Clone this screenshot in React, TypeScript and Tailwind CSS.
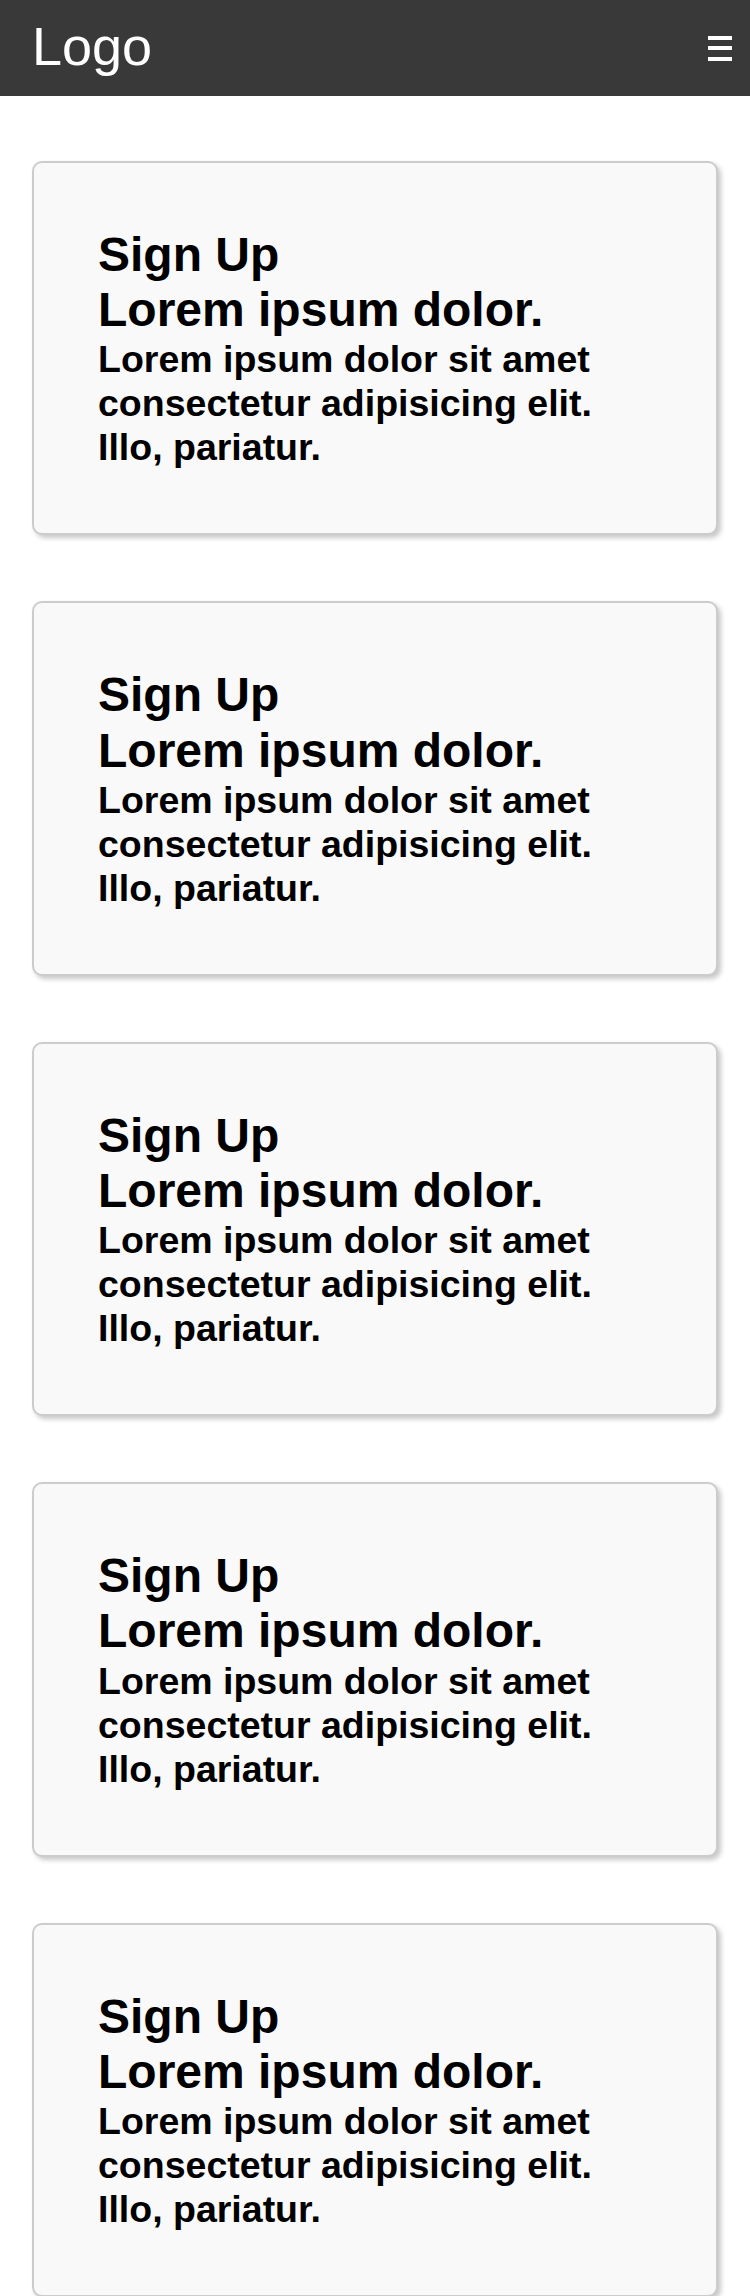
const cards = [1, 2, 3, 4, 5];

function Card() {
  return (
    <div className="rounded-[10px] border-2 border-[#cccccc] bg-[#f9f9f9] p-[64px] shadow-[3px_3px_5px_rgba(0,0,0,0.22)]">
      <h1 className="text-[48px] font-bold leading-[1.15] text-black">
        Sign Up
        <br />
        Lorem ipsum dolor.
      </h1>
      <p className="text-[37.5px] font-bold leading-[44px] text-black">
        Lorem ipsum dolor sit amet consectetur adipisicing elit. Illo, pariatur.
      </p>
    </div>
  );
}

export default function App() {
  return (
    <div className="min-h-screen bg-white font-['Liberation_Sans',Arial,sans-serif]">
      <header className="flex h-[96px] items-center justify-between bg-[#393939] pb-[3px] pl-[32px] pr-[18px]">
        <span className="text-[54px] leading-[1.15] text-white">Logo</span>
        <button type="button" aria-label="Menu" className="flex flex-col gap-[6.5px] pt-[3px]">
          <span className="block h-[4px] w-[24px] bg-white" />
          <span className="block h-[4px] w-[24px] bg-white" />
          <span className="block h-[4px] w-[24px] bg-white" />
        </button>
      </header>

      <main className="flex flex-col gap-[66px] px-[32px] pb-[66px] pt-[65px]">
        {cards.map((n) => (
          <Card key={n} />
        ))}
      </main>
    </div>
  );
}
